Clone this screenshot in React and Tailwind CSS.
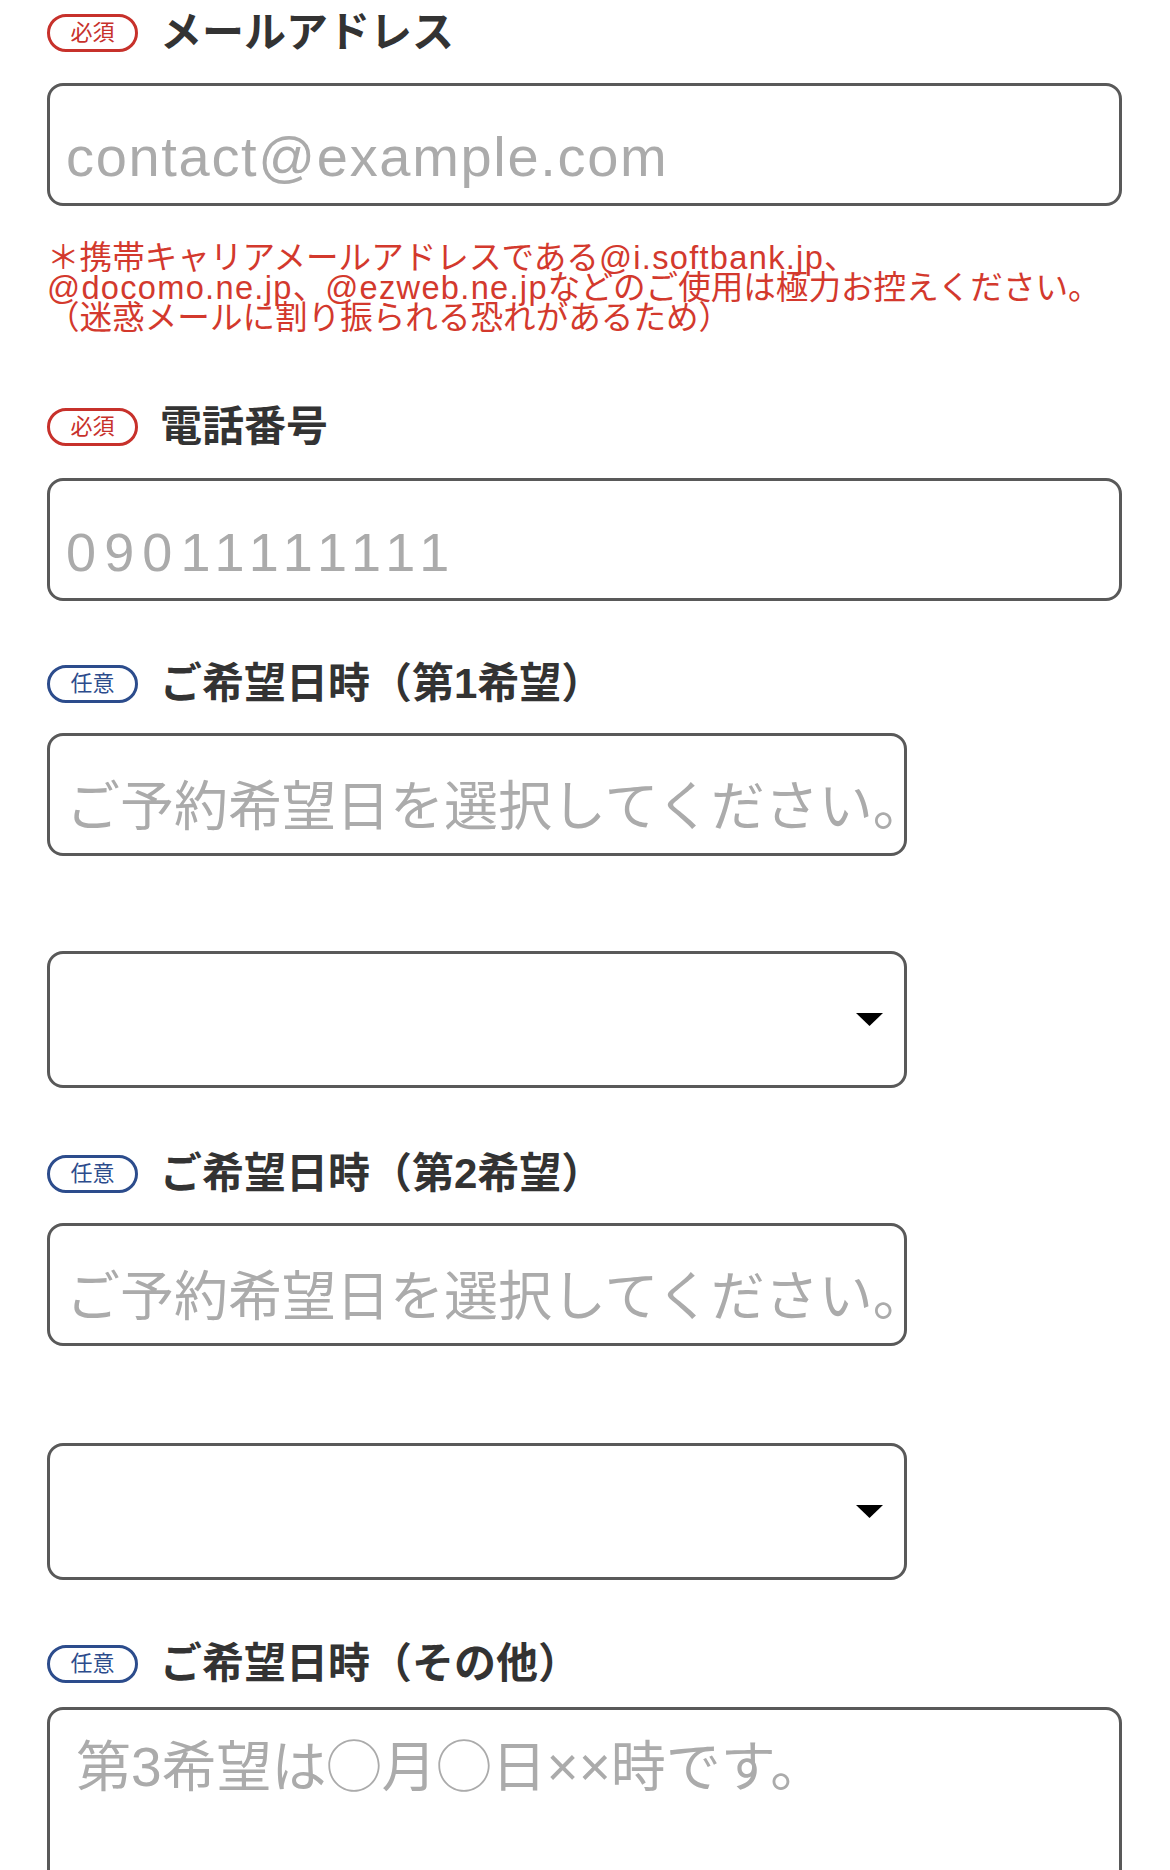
import React from 'react'

// Reservation form fragment - contact fields and preferred date/time pickers
const font = "font-['Liberation_Sans','Noto_Sans_CJK_JP',sans-serif]"

const Badge = ({ required }) => (
  <span
    className={`w-[91px] h-[38px] rounded-full border-[3px] flex items-center justify-center text-[22px] leading-none shrink-0 ${
      required ? 'border-[#c7312b] text-[#c7312b]' : 'border-[#2c4c8c] text-[#2c4c8c]'
    }`}
  >
    {required ? '必須' : '任意'}
  </span>
)

const Label = ({ required, children, className = '' }) => (
  <div className={`flex items-center gap-[22px] h-[38px] ${className}`}>
    <Badge required={required} />
    <h3 className="text-[42px] leading-none font-bold text-[#333333]">{children}</h3>
  </div>
)

const TextField = ({ placeholder, className = '', inputClass = '' }) => (
  <input
    type="text"
    placeholder={placeholder}
    className={`block h-[123px] bg-white border-[3px] border-[#595959] rounded-[16px] pl-[16px] pr-0 pt-[24px] text-[54px] text-[#333] placeholder:text-[#ababab] outline-none ${font} ${className} ${inputClass}`}
  />
)

const SelectBox = ({ className = '' }) => (
  <div className={`h-[137px] w-[860px] border-[3px] border-[#595959] rounded-[16px] bg-white flex items-center justify-end pr-[21px] ${className}`}>
    <svg width="27" height="13" viewBox="0 0 27 13">
      <polygon points="0,0 27,0 13.5,13" fill="#000" />
    </svg>
  </div>
)

const Latin = ({ children }) => <span className="tracking-[0.04em]">{children}</span>

export default function App() {
  return (
    <div className={`h-[1870px] overflow-hidden bg-white pl-[47px] pr-[48px] pt-[14px] ${font}`}>
      <Label required>メールアドレス</Label>
      <TextField
        placeholder="contact@example.com"
        className="mt-[31px] w-full"
        inputClass="text-[56px] tracking-[0.03em]"
      />
      <p className="mt-[37px] text-[32.6px] leading-[30px] text-[#d3392d]">
        ＊携帯キャリアメールアドレスである<Latin>@i.softbank.jp</Latin>、
        <br />
        <Latin>@docomo.ne.jp</Latin>、<Latin>@ezweb.ne.jp</Latin>などのご使用は極力お控えください。
        <br />
        （迷惑メールに割り振られる恐れがあるため）
      </p>

      <Label required className="mt-[75px]">電話番号</Label>
      <TextField
        placeholder="09011111111"
        className="mt-[32px] w-full"
        inputClass="tracking-[0.15em]"
      />

      <Label className="mt-[64px]">ご希望日時（第1希望）</Label>
      <TextField placeholder="ご予約希望日を選択してください。" className="mt-[30px] w-[860px]" />
      <SelectBox className="mt-[95px]" />

      <Label className="mt-[67px]">ご希望日時（第2希望）</Label>
      <TextField placeholder="ご予約希望日を選択してください。" className="mt-[30px] w-[860px]" />
      <SelectBox className="mt-[97px]" />

      <Label className="mt-[65px]">ご希望日時（その他）</Label>
      <textarea
        placeholder="第3希望は◯月◯日××時です。"
        className={`mt-[24px] block w-full h-[260px] resize-none border-[3px] border-[#595959] rounded-[16px] pl-[26px] pt-[24px] text-[55px] leading-[1.2] placeholder:text-[#ababab] outline-none ${font}`}
      />
    </div>
  )
}
